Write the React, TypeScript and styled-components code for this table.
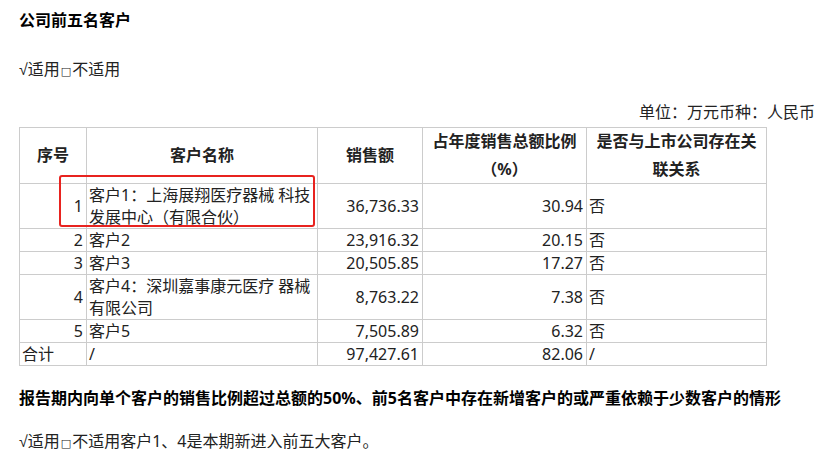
import React from "react";
import styled, { createGlobalStyle } from "styled-components";

const Global = createGlobalStyle`
  html, body { margin: 0; padding: 0; background: #fff; }
  body { font-family: "Noto Sans", "Noto Sans CJK SC", sans-serif; color: #222; font-size: 16px; }
`;

const Page = styled.div`
  width: 834px;
  height: 459px;
  box-sizing: border-box;
  padding: 9px 19px 0 19px;
  display: flex;
  flex-direction: column;
  overflow: hidden;
`;

const Heading = styled.div<{ $gap?: number }>`
  font-weight: 700;
  line-height: 22px;
  height: 22px;
  color: #000;
  margin-top: ${(p) => p.$gap ?? 0}px;
  white-space: nowrap;
`;

const Para = styled.div<{ $gap?: number; $right?: boolean }>`
  line-height: 22px;
  height: 22px;
  margin-top: ${(p) => p.$gap ?? 0}px;
  text-align: ${(p) => (p.$right ? "right" : "left")};
  white-space: nowrap;
`;

const Check = styled.span`
  font-family: "Liberation Sans", sans-serif;
  font-size: 16px;
  line-height: 0;
`;

const Box = styled.span`
  font-family: "DejaVu Sans", sans-serif;
  font-size: 11px;
  line-height: 0;
  margin: 0 1px;
`;

const TableWrap = styled.div`
  position: relative;
  margin-top: 4px;
  width: 747px;
`;

const Table = styled.table`
  border-collapse: collapse;
  table-layout: fixed;
  width: 747px;
`;

const Th = styled.th`
  border: 1px solid #cccccc;
  font-weight: 700;
  line-height: 27.5px;
  padding: 0;
  text-align: center;
  vertical-align: middle;
  color: #222;
`;

const Td = styled.td<{ $align?: "left" | "right" | "center" }>`
  border: 1px solid #cccccc;
  line-height: 22px;
  padding: 0 3px 0 2px;
  text-align: ${(p) => p.$align ?? "left"};
  vertical-align: middle;
  color: #222;
`;

const Highlight = styled.div`
  position: absolute;
  left: 40px;
  top: 48px;
  width: 256px;
  height: 52px;
  box-sizing: border-box;
  border: 2px solid #e8231f;
  border-radius: 3px;
  pointer-events: none;
`;

type Row = { no: string; name: string; amount: string; pct: string; rel: string };

const rows: Row[] = [
  { no: "1", name: "客户1：上海展翔医疗器械 科技发展中心（有限合伙）", amount: "36,736.33", pct: "30.94", rel: "否" },
  { no: "2", name: "客户2", amount: "23,916.32", pct: "20.15", rel: "否" },
  { no: "3", name: "客户3", amount: "20,505.85", pct: "17.27", rel: "否" },
  { no: "4", name: "客户4：深圳嘉事康元医疗 器械有限公司", amount: "8,763.22", pct: "7.38", rel: "否" },
  { no: "5", name: "客户5", amount: "7,505.89", pct: "6.32", rel: "否" },
];

export default function App() {
  return (
    <>
      <Global />
      <Page>
        <Heading>公司前五名客户</Heading>
        <Para $gap={27}>
          <Check>√</Check>适用<Box>□</Box>不适用
        </Para>
        <Para $gap={21} $right>
          单位：万元币种：人民币
        </Para>
        <TableWrap>
          <Table>
            <colgroup>
              <col style={{ width: 67 }} />
              <col style={{ width: 231 }} />
              <col style={{ width: 105 }} />
              <col style={{ width: 164 }} />
              <col style={{ width: 180 }} />
            </colgroup>
            <thead>
              <tr>
                <Th>序号</Th>
                <Th>客户名称</Th>
                <Th>销售额</Th>
                <Th>
                  占年度销售总额比例
                  <br />（%）
                </Th>
                <Th>
                  是否与上市公司存在关
                  <br />
                  联关系
                </Th>
              </tr>
            </thead>
            <tbody>
              {rows.map((r) => (
                <tr key={r.no}>
                  <Td $align="right">{r.no}</Td>
                  <Td>{r.name}</Td>
                  <Td $align="right">{r.amount}</Td>
                  <Td $align="right">{r.pct}</Td>
                  <Td>{r.rel}</Td>
                </tr>
              ))}
              <tr>
                <Td>合计</Td>
                <Td>/</Td>
                <Td $align="right">97,427.61</Td>
                <Td $align="right">82.06</Td>
                <Td>/</Td>
              </tr>
            </tbody>
          </Table>
          <Highlight />
        </TableWrap>
        <Heading $gap={21}>
          报告期内向单个客户的销售比例超过总额的50%、前5名客户中存在新增客户的或严重依赖于少数客户的情形
        </Heading>
        <Para $gap={21}>
          <Check>√</Check>适用<Box>□</Box>不适用客户1、4是本期新进入前五大客户。
        </Para>
      </Page>
    </>
  );
}
